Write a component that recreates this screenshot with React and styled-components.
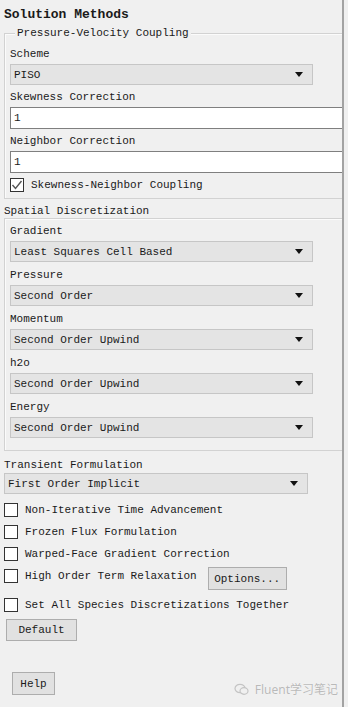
import React from "react";
import styled, { createGlobalStyle } from "styled-components";

const GlobalStyle = createGlobalStyle`
  html, body {
    margin: 0;
    padding: 0;
    background: #f0f0f0;
  }
  body {
    font-family: "Liberation Mono", "DejaVu Sans Mono", monospace;
    font-size: 11px;
    color: #1a1a1a;
  }
`;

const Window = styled.div`
  position: relative;
  width: 348px;
  height: 707px;
  display: flex;
  overflow: hidden;
  background: #f0f0f0;
`;

const Panel = styled.div`
  width: 344px;
  flex: none;
  box-sizing: border-box;
  border-right: 2px solid #a3a3a3;
  overflow: hidden;
  display: flex;
  flex-direction: column;
`;

const Title = styled.div`
  margin: 7px 0 0 4px;
  font-size: 13px;
  font-weight: bold;
  line-height: 16px;
  white-space: nowrap;
`;

const Group = styled.div`
  position: relative;
  margin: ${(p) => p.$top}px 0 0 4px;
  width: 380px;
  flex: none;
  border: 1px solid #d2d2d2;
  box-shadow: inset 1px 1px 0 #fbfbfb;
  padding: ${(p) => p.$pt}px 0 ${(p) => p.$pb}px 5px;
  display: flex;
  flex-direction: column;
  gap: ${(p) => p.$gap}px;
`;

const Legend = styled.span`
  position: absolute;
  top: -7px;
  left: 10px;
  padding: 0 2px;
  line-height: 13px;
  background: #f0f0f0;
  white-space: nowrap;
`;

const SectionLabel = styled.div`
  margin: 6px 0 0 4px;
  line-height: 13px;
  white-space: nowrap;
`;

const Field = styled.div`
  display: flex;
  flex-direction: column;
  margin-left: ${(p) => p.$left || 0}px;
`;

const Label = styled.div`
  line-height: 14px;
  margin-top: ${(p) => p.$mt || 0}px;
  margin-bottom: ${(p) => p.$mb ?? 3}px;
  white-space: nowrap;
`;

const Select = styled.div`
  box-sizing: border-box;
  width: ${(p) => p.$w}px;
  height: 21px;
  background: #e4e4e4;
  border: 1px solid #c6c6c6;
  display: flex;
  align-items: center;
  justify-content: space-between;
  padding: 0 9px 0 3px;
  white-space: nowrap;
`;

const Input = styled.div`
  box-sizing: border-box;
  width: 380px;
  height: 22px;
  background: #ffffff;
  border: 1px solid #7f7f7f;
  display: flex;
  align-items: center;
  padding-left: 3px;
`;

const CheckRow = styled.div`
  display: flex;
  align-items: ${(p) => (p.$top ? "flex-start" : "center")};
  height: ${(p) => p.$h || 22}px;
  gap: 7px;
  margin: ${(p) => p.$mt || 0}px 0 0 ${(p) => p.$left || 0}px;
  white-space: nowrap;
`;

const CheckText = styled.span`
  line-height: 22px;
`;

const Box = styled.span`
  box-sizing: border-box;
  width: 14px;
  height: 14px;
  flex: none;
  background: #ffffff;
  border: 1px solid #333333;
  display: flex;
  align-items: center;
  justify-content: center;
  margin-top: ${(p) => (p.$top ? 4 : 0)}px;
`;

const Button = styled.div`
  box-sizing: border-box;
  width: ${(p) => p.$w}px;
  height: ${(p) => p.$h || 23}px;
  margin: ${(p) => p.$mt || 0}px 0 0 ${(p) => p.$left || 0}px;
  background: #e1e1e1;
  border: 1px solid #adadad;
  display: flex;
  align-items: center;
  justify-content: center;
  white-space: nowrap;
  flex: none;
`;

const Watermark = styled.div`
  position: absolute;
  right: 10px;
  bottom: 9px;
  display: flex;
  align-items: center;
  gap: 6px;
  font-family: "Noto Sans", "Noto Sans CJK SC", sans-serif;
  font-size: 12px;
  color: #b9b9b9;
  text-shadow: 0 0 1px #ffffff;
`;

const Arrow = () => (
  <svg width="8" height="5" viewBox="0 0 8 5">
    <path d="M0 0 L8 0 L4 5 Z" fill="#111" />
  </svg>
);

const Tick = () => (
  <svg width="12" height="12" viewBox="0 0 12 12">
    <path d="M1.5 6 L4.5 9.5 L10.5 2" fill="none" stroke="#555" strokeWidth="1.4" />
  </svg>
);

const ChatIcon = () => (
  <svg width="15" height="13" viewBox="0 0 15 13">
    <ellipse cx="6" cy="5.5" rx="5" ry="4.2" fill="none" stroke="#c4c4c4" strokeWidth="1.2" />
    <ellipse cx="10" cy="8" rx="4" ry="3.3" fill="#f0f0f0" stroke="#c4c4c4" strokeWidth="1.2" />
  </svg>
);

const spatial = [
  ["Gradient", "Least Squares Cell Based"],
  ["Pressure", "Second Order"],
  ["Momentum", "Second Order Upwind"],
  ["h2o", "Second Order Upwind"],
  ["Energy", "Second Order Upwind"],
];

const transientOptions = [
  "Non-Iterative Time Advancement",
  "Frozen Flux Formulation",
  "Warped-Face Gradient Correction",
];

const App = () => (
  <Window>
    <GlobalStyle />
    <Panel>
      <Title>Solution Methods</Title>

      <Group $top={10} $pt={13} $pb={2} $gap={5}>
        <Legend>Pressure-Velocity Coupling</Legend>
        <Field>
          <Label>Scheme</Label>
          <Select $w={303}>
            PISO
            <Arrow />
          </Select>
        </Field>
        <Field>
          <Label>Skewness Correction</Label>
          <Input>1</Input>
        </Field>
        <Field>
          <Label>Neighbor Correction</Label>
          <Input>1</Input>
        </Field>
        <CheckRow $mt={-4}>
          <Box>
            <Tick />
          </Box>
          <CheckText>Skewness-Neighbor Coupling</CheckText>
        </CheckRow>
      </Group>

      <SectionLabel>Spatial Discretization</SectionLabel>
      <Group $top={0} $pt={5} $pb={12} $gap={6}>
        {spatial.map(([label, value]) => (
          <Field key={label}>
            <Label>{label}</Label>
            <Select $w={303}>
              {value}
              <Arrow />
            </Select>
          </Field>
        ))}
      </Group>

      <Field $left={4}>
        <Label $mt={7} $mb={1}>
          Transient Formulation
        </Label>
        <Select $w={304}>
          First Order Implicit
          <Arrow />
        </Select>
      </Field>

      {transientOptions.map((text, i) => (
        <CheckRow key={text} $left={4} $mt={i === 0 ? 5 : 0}>
          <Box />
          <CheckText>{text}</CheckText>
        </CheckRow>
      ))}
      <CheckRow $left={4} $top $h={26}>
        <Box $top />
        <CheckText>High Order Term Relaxation</CheckText>
        <Button $w={79} $mt={2} $left={4}>
          Options...
        </Button>
      </CheckRow>
      <CheckRow $left={4} $mt={3}>
        <Box />
        <CheckText>Set All Species Discretizations Together</CheckText>
      </CheckRow>

      <Button $w={71} $h={22} $mt={3} $left={6}>
        Default
      </Button>
      <Button $w={43} $mt={31} $left={12}>
        Help
      </Button>
    </Panel>
    <Watermark>
      <ChatIcon />
      Fluent学习笔记
    </Watermark>
  </Window>
);

export default App;
